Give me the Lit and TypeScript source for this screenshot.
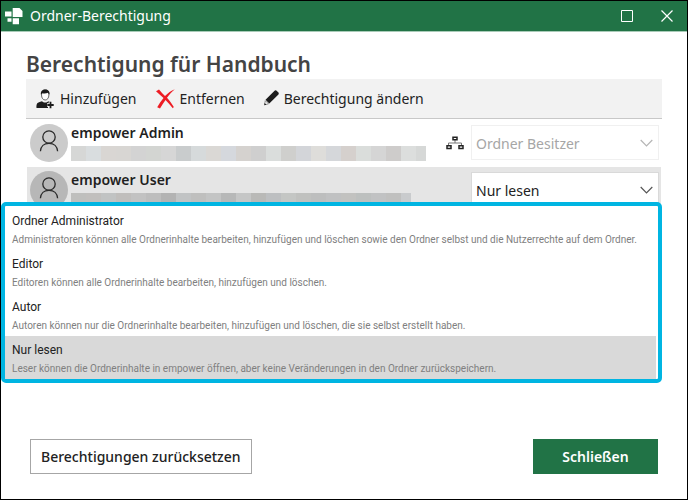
import { LitElement, html, css, nothing } from "lit";
import { customElement, property, state } from "lit/decorators.js";
import { classMap } from "lit/directives/class-map.js";
import { styleMap } from "lit/directives/style-map.js";

interface Role {
  name: string;
  text: string;
}

interface Member {
  name: string;
  role: string;
  locked: boolean;
  inherited: boolean;
  mask: string[];
}

const ROLES: Role[] = [
  {
    name: "Ordner Administrator",
    text: "Administratoren können alle Ordnerinhalte bearbeiten, hinzufügen und löschen sowie den Ordner selbst und die Nutzerrechte auf dem Ordner.",
  },
  { name: "Editor", text: "Editoren können alle Ordnerinhalte bearbeiten, hinzufügen und löschen." },
  {
    name: "Autor",
    text: "Autoren können nur die Ordnerinhalte bearbeiten, hinzufügen und löschen, die sie selbst erstellt haben.",
  },
  {
    name: "Nur lesen",
    text: "Leser können die Ordnerinhalte in empower öffnen, aber keine Veränderungen in den Ordner zurückspeichern.",
  },
];

const MEMBERS: Member[] = [
  {
    name: "empower Admin",
    role: "Ordner Besitzer",
    locked: true,
    inherited: true,
    mask: [
      "#d6d7d6", "#d9dddf", "#d9d6d3", "#d8d6d3", "#d3d3d3", "#d3d5d2", "#d6d6d6", "#c9cccd",
      "#d6dadb", "#dad8d5", "#d5d8dd", "#d5d2cf", "#cfcfcf", "#dadddc", "#cfcfcd", "#d3d5d9",
      "#deddda", "#d5d7da", "#d5d0cd", "#dadddb", "#d5d5d5", "#cecccb", "#dcdedd", "#d6d8d7",
    ],
  },
  {
    name: "empower User",
    role: "Nur lesen",
    locked: false,
    inherited: false,
    mask: [
      "#bfbfbd", "#c1bfbd", "#c1c3c3", "#c0bebc", "#c2c2c2", "#bdbdbd", "#b3b3b3", "#c1c3c4",
      "#bfbfbe", "#c3c4c4", "#b7b8b8", "#c5c6c6", "#b9b9b7", "#bdbfc1", "#c4c6c4", "#c0c1bf",
      "#bdbebe", "#c0c1c2", "#c2c2c0", "#bdc0bf", "#c1c2c3", "#c0c0bf", "#c9cbcd",
    ],
  },
];

@customElement("member-row")
export class MemberRow extends LitElement {
  @property({ attribute: false }) member!: Member;
  @property({ type: Boolean, reflect: true }) selected = false;

  static styles = css`
    :host {
      display: flex;
      align-items: center;
      box-sizing: border-box;
      height: 47px;
      margin: 0 1px;
      padding: 0 2px 2px 3px;
    }
    :host([selected]) {
      background: #e5e5e5;
    }
    .avatar {
      flex: none;
      width: 38px;
      height: 38px;
      border-radius: 50%;
      background: #cbcbcb;
    }
    :host([selected]) .avatar {
      background: #b7b7b7;
    }
    .avatar svg {
      display: block;
    }
    .who {
      flex: 1;
      min-width: 0;
      padding: 0 20px 2px 3px;
    }
    .name {
      margin-bottom: 2px;
      font-weight: 600;
      line-height: 22px;
      color: #1f1f1f;
    }
    .mask {
      display: flex;
      height: 15px;
      overflow: hidden;
    }
    .block {
      width: 15px;
      flex: none;
    }
    .block:last-child {
      width: 10px;
    }
    .tree {
      flex: none;
      margin-right: 7px;
    }
    .pick {
      flex: none;
      display: grid;
      align-items: center;
      width: 188px;
    }
    .pick > * {
      grid-area: 1 / 1;
    }
    select {
      appearance: none;
      width: 100%;
      height: 35px;
      margin: 0;
      padding: 2px 24px 0 4px;
      border: 1px solid #d9d9d9;
      border-radius: 0;
      background: #fff;
      color: #222;
      font: inherit;
    }
    select:disabled {
      border-color: #f0f0f0;
      color: #a6a6a6;
      opacity: 1;
    }
    .arrow {
      justify-self: end;
      margin-right: 6px;
      pointer-events: none;
      stroke: #555;
    }
    select:disabled + .arrow {
      stroke: #b5b5b5;
    }
  `;

  render() {
    const m = this.member;
    return html`
      <div class="avatar">
        <svg width="38" height="38" viewBox="0 0 38 38" fill="none" stroke="#2a2a2a" stroke-width="1.3">
          <circle cx="19" cy="13" r="6.2" />
          <path d="M10.400 27.300c.3-5 3.700-8 8.600-8s8.300 3 8.600 8" />
        </svg>
      </div>
      <div class="who">
        <div class="name">${m.name}</div>
        <div class="mask">
          ${m.mask.map((c) => html`<span class="block" style=${styleMap({ background: c })}></span>`)}
        </div>
      </div>
      ${m.inherited
        ? html`<svg class="tree" width="18" height="14" viewBox="0 0 18 14" fill="none">
            <path d="M9 4v3M2.500 9.500v-2.500h13v2.500" stroke="#777" />
            <path d="M7 1.200h4v2.600h-4zM1 9.800h4v2.600h-4zM13 9.800h4v2.600h-4z" stroke="#222" stroke-width="1.500" />
          </svg>`
        : nothing}
      <div class="pick">
        <select aria-label=${`Berechtigung von ${m.name}`} ?disabled=${m.locked}>
          <option>${m.role}</option>
        </select>
        <svg class="arrow" width="13" height="8" viewBox="0 0 13 8" fill="none" stroke-width="1.2">
          <path d="M.7 1l5.800 5.800 5.800-5.800" />
        </svg>
      </div>
    `;
  }
}

@customElement("app-root")
export class AppRoot extends LitElement {
  @state() private role = "Nur lesen";

  static styles = css`
    :host {
      display: block;
      font: 14px/20px "Noto Sans", sans-serif;
      color: #222;
    }
    .window {
      display: flex;
      flex-direction: column;
      box-sizing: border-box;
      min-height: 100vh;
      border: 1px solid #000;
      background: #fff;
    }
    .titlebar {
      display: flex;
      align-items: center;
      height: 30px;
      padding: 0 12px 0 4px;
      background: #217346;
      border-bottom: 1px solid #a9cbb8;
      color: #fff;
    }
    .logo {
      flex: none;
      margin-right: 7px;
    }
    .caption {
      flex: 1;
    }
    button {
      margin: 0;
      font: inherit;
      color: inherit;
      border: 0;
      padding: 0;
      background: none;
      cursor: pointer;
    }
    .sys {
      display: grid;
      place-items: center;
      width: 16px;
      height: 16px;
    }
    .controls {
      display: flex;
      gap: 24px;
    }
    .body {
      flex: 1;
      display: flex;
      flex-direction: column;
      padding: 17px 25px 25px;
    }
    h1 {
      margin: 0;
      font-size: 21px;
      line-height: 30px;
      font-weight: 600;
      color: #444;
    }
    .toolbar {
      display: flex;
      align-items: center;
      gap: 20px;
      box-sizing: border-box;
      height: 40px;
      padding-left: 10px;
      background: #f2f2f2;
      border-bottom: 1px solid #c8c8c8;
    }
    .tool {
      display: flex;
      align-items: center;
      gap: 5px;
    }
    .tool + .tool {
      margin-left: -1px;
    }
    .members {
      position: relative;
      padding-top: 1px;
      margin-bottom: 180px;
    }
    .roles {
      position: absolute;
      top: 83px;
      left: -25px;
      right: 0;
      box-sizing: border-box;
      padding: 1px 2px 0 0;
      border: 4px solid #00b5e2;
      border-radius: 5px;
      background: #fff;
    }
    .role {
      display: block;
      box-sizing: border-box;
      width: 100%;
      height: 43px;
      padding: 3px 7px 0;
      text-align: left;
      font-family: Roboto, sans-serif;
      color: #222;
    }
    .role.on {
      background: #d9d9d9;
    }
    .role-name {
      display: block;
      font-size: 12px;
      line-height: 20px;
    }
    .role-text {
      display: block;
      font-size: 10px;
      line-height: 18px;
      color: #808080;
      white-space: nowrap;
    }
    .footer {
      display: flex;
      justify-content: space-between;
      margin-top: auto;
      padding: 0 4px;
    }
    .reset,
    .close {
      height: 35px;
    }
    .reset {
      padding: 0 10px;
      border: 1px solid #a6a6a6;
      background: #fff;
      font-weight: 500;
    }
    .close {
      width: 125px;
      background: #217346;
      color: #fff;
      font-weight: 600;
    }
  `;

  render() {
    return html`
      <div class="window">
        <header class="titlebar">
          <svg class="logo" width="18" height="18" viewBox="0 0 18 18" fill="#fff">
            <path d="M0 4.500h6.500v5h-6.500zM7.700 1h6.800l3 3v6h-9.800zM2.500 11.200h4v3.600h-4zM7.700 11.200h6.300v6h-6.300z" />
          </svg>
          <span class="caption">Ordner-Berechtigung</span>
          <div class="controls">
            <button class="sys" aria-label="Maximieren">
              <svg width="12" height="12" viewBox="0 0 12 12" fill="none" stroke="#fff">
                <path d="M.5.5h11v11h-11z" />
              </svg>
            </button>
            <button class="sys" aria-label="Fenster schließen">
              <svg width="12" height="12" viewBox="0 0 12 12" fill="none" stroke="#fff" stroke-width="1.200">
                <path d="M.5.5l11 11M11.500.5l-11 11" />
              </svg>
            </button>
          </div>
        </header>
        <main class="body">
          <h1>Berechtigung für Handbuch</h1>
          <div class="toolbar">
            <button class="tool">
              <svg width="19" height="20" viewBox="0 0 19 20">
                <path d="M5.500 6c0-3.500 1.300-5 3.700-5s3.700 1.500 3.700 5c0 3-1.700 5-3.700 5s-3.700-2-3.700-5z" fill="#fff" stroke="#444" stroke-width=".8" />
                <path d="M4.900 5.600c-.4-3.600 1.600-5.200 4.300-5.200s4.700 1.600 4.300 5.200c-.8-.6-1.200-1.200-1.400-1.800-2 .8-4.300.8-5.800.4-.4.400-.8.900-1.400 1.400z" fill="#1c1c1c" />
                <path d="M.5 19c-.3-4.500.6-5.700 5.500-6.800 1.500 1.800 4.800 1.800 6.300 0l2.700.8v2.700h-3v3.300z" fill="#1c1c1c" />
                <path d="M14.500 12.300v7.200M11 16h7.300" stroke="#f2f2f2" stroke-width="3.600" />
                <path d="M14.500 12.800v6.400M11.300 16h6.400" stroke="#1c1c1c" stroke-width="1.800" />
              </svg>
              Hinzufügen
            </button>
            <button class="tool">
              <svg width="19" height="20" viewBox="0 0 19 20" fill="#ed1c24">
                <path d="M0 2.200L3 .5c2 2.500 4 4.500 6 6.500C12 4 15 1.500 18.800.2c-3 2.500-5.500 5.300-7.800 8.600 2.300 2.700 4.700 5.600 6.800 9.200l-1 1.200c-2.300-3-4.800-5.700-7.300-8.200-2 2.800-3.800 5.700-5.500 8.500l-2.800-1.300c1.800-3.300 3.900-6.300 6.300-9.200-2.400-2.200-4.800-4.300-7.500-6.800z" />
              </svg>
              Entfernen
            </button>
            <button class="tool">
              <svg width="15" height="17" viewBox="0 0 15 17" fill="#1c1c1c">
                <path d="M1.300 10.700l3.200 3.200-3.700.8-.2-.2z" fill="#fff" stroke="#777" stroke-width=".8" />
                <path d="M.2 15.200l.5-2.200 1.700 1.700zM1.500 9.700L10.300.9c.8-.8 1.800-.8 2.600 0l1.300 1.300c.8.800.8 1.700 0 2.500l-8.900 8.800z" />
              </svg>
              Berechtigung ändern
            </button>
          </div>
          <section class="members">
            ${MEMBERS.map((m) => html`<member-row .member=${m} ?selected=${!m.locked}></member-row>`)}
            <div class="roles" role="listbox" aria-label="Berechtigung">
              ${ROLES.map(
                (r) => html`<button
                  role="option"
                  aria-selected=${r.name === this.role}
                  class=${classMap({ role: true, on: r.name === this.role })}
                  @click=${() => (this.role = r.name)}
                >
                  <span class="role-name">${r.name}</span>
                  <span class="role-text">${r.text}</span>
                </button>`,
              )}
            </div>
          </section>
          <footer class="footer">
            <button class="reset">Berechtigungen zurücksetzen</button>
            <button class="close">Schließen</button>
          </footer>
        </main>
      </div>
    `;
  }
}
